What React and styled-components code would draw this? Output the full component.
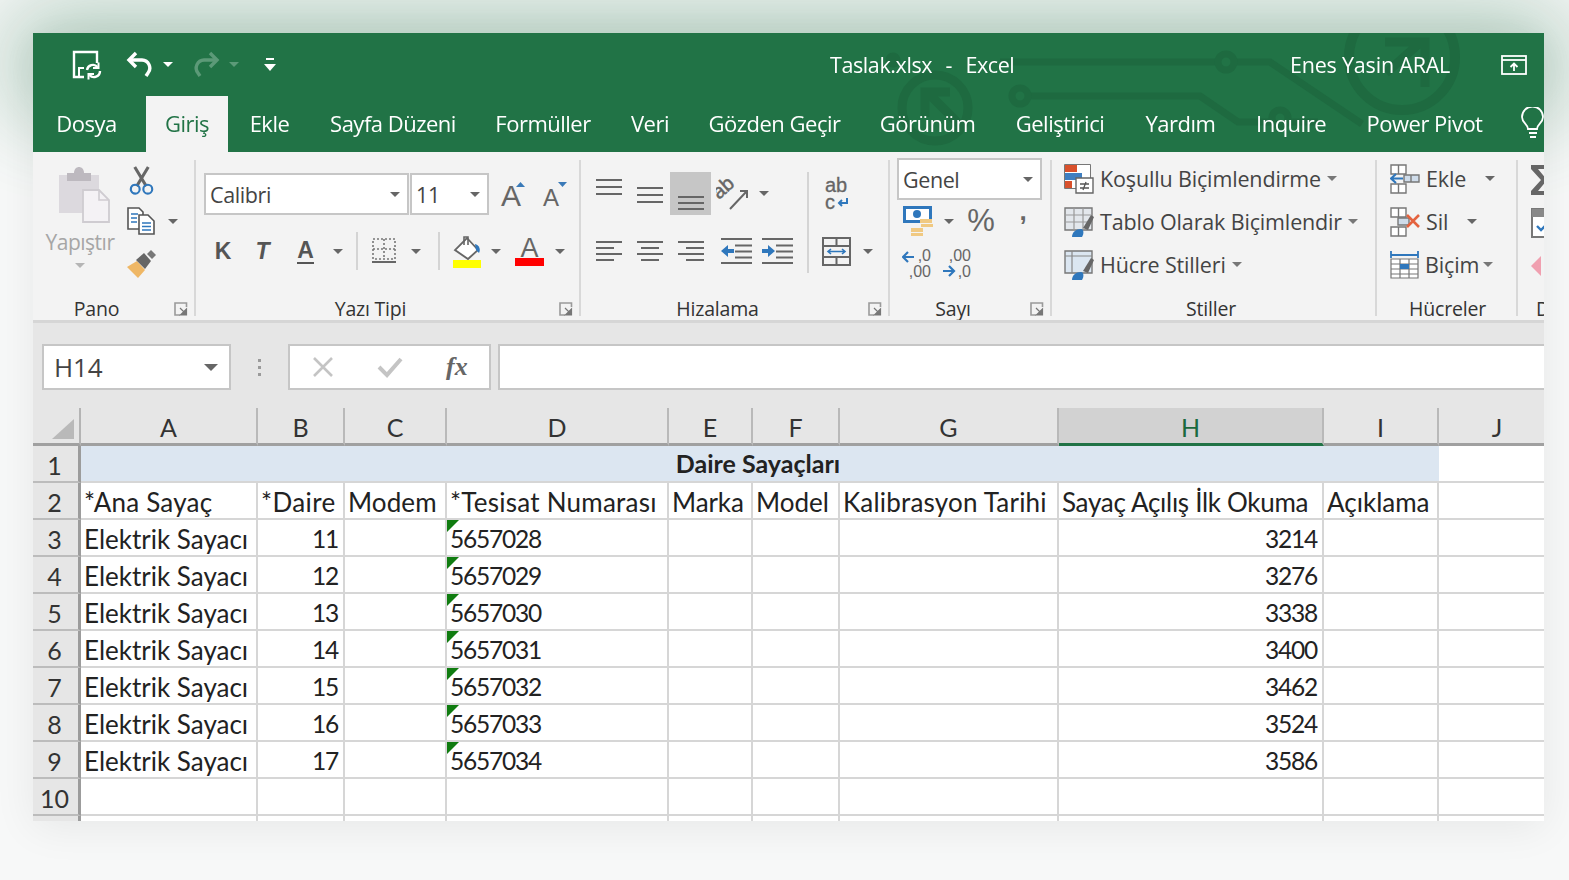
import React from "react";
import styled, { createGlobalStyle } from "styled-components";

const GlobalStyle = createGlobalStyle`
  html, body { margin: 0; padding: 0; background: #f7f8f8; }
  * { box-sizing: border-box; }
`;

const UI_FONT = `"Open Sans", "Noto Sans", sans-serif`;
const CELL_FONT = `Lato, "Open Sans", sans-serif`;
const GREEN = "#217346";

const Page = styled.div`
  width: 1569px;
  height: 880px;
  padding: 33px 25px 0 33px;
  overflow: hidden;
  font-family: ${UI_FONT};
`;

const Window = styled.div`
  width: 1511px;
  height: 788px;
  position: relative;
  display: flex;
  flex-direction: column;
  filter: blur(0.45px);
  box-shadow: 0 6px 40px rgba(0, 0, 0, 0.07);
`;

/* title bar */
const TitleBar = styled.div`
  height: 63px;
  flex: none;
  background: ${GREEN};
  display: flex;
  align-items: center;
  box-shadow: 0 0 90px 20px rgba(33, 115, 70, 0.38);
  color: #fff;
`;

const Qat = styled.div`
  display: flex;
  align-items: center;
  width: 797px;
  padding-left: 39px;
  position: relative;
  z-index: 2;
`;

const QatButton = styled.div`
  width: ${(p) => p.$w}px;
  height: 32px;
  display: flex;
  align-items: center;
  justify-content: ${(p) => p.$justify || "flex-start"};
  flex: none;
`;

const TitleText = styled.div`
  width: 460px;
  font-size: 21.5px;
  letter-spacing: -0.4px;
  word-spacing: 1.5px;
  white-space: pre;
  position: relative;
  z-index: 2;
`;

const UserName = styled.div`
  font-size: 21.5px;
  letter-spacing: -0.2px;
  width: 211px;
  position: relative;
  z-index: 2;
`;

const Circuit = styled.svg`
  position: absolute;
  left: 0;
  top: 0;
  z-index: 1;
  pointer-events: none;
`;

const Tabs = styled.div`
  height: 56px;
  flex: none;
  background: ${GREEN};
  display: flex;
  position: relative;
  overflow: hidden;
  align-items: flex-end;
`;

const Tab = styled.div`
  width: ${(p) => p.$w}px;
  height: 56px;
  flex: none;
  display: flex;
  align-items: center;
  justify-content: center;
  font-size: 22px;
  letter-spacing: -0.5px;
  position: relative;
  z-index: 2;
  padding-bottom: 2px;
  padding-right: ${(p) => p.$pr || 0}px;
  color: ${(p) => (p.$active ? GREEN : "#fff")};
  background: ${(p) => (p.$active ? "#f3f3f3" : "transparent")};
`;

/* ribbon */
const Ribbon = styled.div`
  height: 171px;
  flex: none;
  background: #f3f3f3;
  border-bottom: 3px solid #d6d6d6;
  padding-top: 8px;
  display: flex;
  align-items: flex-start;
  overflow: hidden;
  color: #444;
  position: relative;
`;

const Group = styled.section`
  width: ${(p) => p.$w}px;
  height: 156px;
  flex: none;
  position: relative;
  display: flex;
  flex-direction: column;
  border-right: ${(p) => (p.$last ? "none" : "2px solid #d8d8d8")};
`;

const GroupBody = styled.div`
  flex: 1;
  min-height: 0;
  display: flex;
  padding: ${(p) => p.$pad || "0"};
`;

const GroupLabel = styled.div`
  height: 26px;
  flex: none;
  display: flex;
  align-items: center;
  justify-content: ${(p) => p.$justify || "center"};
  padding: 12px ${(p) => p.$pr || 0}px 0 ${(p) => p.$pl || 0}px;
  font-size: 19.5px;
  letter-spacing: -0.2px;
  line-height: 14px;
  color: #333;
  white-space: nowrap;
`;

const LauncherBox = styled.svg`
  position: absolute;
  right: 6px;
  bottom: 0;
`;

const Column = styled.div`
  display: flex;
  flex-direction: column;
  align-items: ${(p) => p.$align || "flex-start"};
  width: ${(p) => (p.$w ? `${p.$w}px` : "auto")};
  margin-top: ${(p) => p.$mt || 0}px;
  flex: none;
`;

const Row = styled.div`
  display: flex;
  align-items: center;
  height: ${(p) => p.$h || 43}px;
  margin-top: ${(p) => p.$mt || 0}px;
  padding-left: ${(p) => p.$pl || 0}px;
  flex: none;
`;

const Btn = styled.div`
  width: ${(p) => p.$w}px;
  height: 100%;
  flex: none;
  display: flex;
  align-items: center;
  justify-content: center;
  background: ${(p) => (p.$selected ? "#c6c6c6" : "transparent")};
  margin-left: ${(p) => p.$ml || 0}px;
`;

const Caret = styled.i`
  display: block;
  flex: none;
  width: 0;
  height: 0;
  border-left: ${(p) => p.$s || 5}px solid transparent;
  border-right: ${(p) => p.$s || 5}px solid transparent;
  border-top: ${(p) => p.$s || 5}px solid ${(p) => p.$color || "#666"};
  margin-left: ${(p) => p.$ml || 0}px;
`;

const Divider = styled.div`
  width: 2px;
  height: ${(p) => p.$h}px;
  background: #d4d4d4;
  margin-left: ${(p) => p.$ml || 0}px;
  margin-right: ${(p) => p.$mr || 0}px;
  flex: none;
`;

const Combo = styled.div`
  width: ${(p) => p.$w}px;
  height: 42px;
  flex: none;
  background: #fff;
  border: 2px solid #c6c6c6;
  margin-left: ${(p) => p.$ml || 0}px;
  margin-top: ${(p) => p.$mt || 0}px;
  display: flex;
  align-items: center;
  justify-content: space-between;
  padding: 0 7px 0 4px;
  font-size: 21.5px;
  letter-spacing: -0.4px;
  color: #444;
`;

const PasteSlot = styled.div`
  margin: 7px 0 0 7px;
  height: 56px;
`;

const PasteLabel = styled.div`
  font-size: 21px;
  letter-spacing: -0.5px;
  color: #a6a6a6;
  margin-top: 6px;
  line-height: 26px;
`;

const LetterBtn = styled.span`
  font-family: "Liberation Sans", sans-serif;
  font-size: 23px;
  font-weight: 700;
  font-style: ${(p) => (p.$italic ? "italic" : "normal")};
  color: #555;
  border-bottom: ${(p) => (p.$under ? "2px solid #555" : "none")};
  line-height: 24px;
`;

const Percent = styled.span`
  font-family: "Liberation Sans", sans-serif;
  font-size: 31px;
  color: #666;
`;

const Comma = styled.span`
  font-family: "Liberation Sans", sans-serif;
  font-size: 26px;
  font-weight: 700;
  color: #666;
  line-height: 26px;
  margin-bottom: 20px;
`;

const StyleRow = styled.div`
  display: flex;
  align-items: center;
  height: 43px;
  flex: none;
  font-size: 21.5px;
  letter-spacing: -0.15px;
  color: #444;
  white-space: nowrap;
  gap: 6px;
`;

/* formula bar */
const FormulaBar = styled.div`
  height: 85px;
  flex: none;
  background: #e6e6e6;
  padding: 21px 0 0 9px;
  display: flex;
  align-items: flex-start;
`;

const NameBox = styled.div`
  width: 189px;
  height: 46px;
  background: #fff;
  border: 2px solid #c6c6c6;
  display: flex;
  align-items: center;
  justify-content: space-between;
  padding: 0 11px 0 10px;
  font-size: 26px;
  letter-spacing: -0.2px;
  color: #444;
`;

const GripDots = styled.div`
  width: 57px;
  height: 46px;
  display: flex;
  flex-direction: column;
  align-items: center;
  justify-content: center;
  gap: 4px;
  & > i {
    display: block;
    width: 3px;
    height: 3px;
    background: #9a9a9a;
  }
`;

const FxBox = styled.div`
  width: 203px;
  height: 46px;
  background: #fff;
  border: 2px solid #c6c6c6;
  display: flex;
  align-items: center;
  gap: 43px;
  padding-left: 22px;
  margin-right: 7px;
`;

const FxMark = styled.span`
  font-family: "Liberation Serif", serif;
  font-style: italic;
  font-weight: 700;
  font-size: 26px;
  color: #666;
`;

const FormulaInput = styled.div`
  flex: 1;
  height: 46px;
  background: #fff;
  border: 2px solid #c6c6c6;
  border-right: none;
`;

/* sheet */
const Sheet = styled.div`
  flex: 1;
  min-height: 0;
  overflow: hidden;
  background: #fff;
  display: grid;
  grid-template-columns: 48px 177px 87px 102px 222px 84px 87px 219px 265px 115px 118px;
  grid-template-rows: 38px;
  grid-auto-rows: 37px;
  font-family: ${CELL_FONT};
  font-size: 26px;
  color: #222;
`;

const Corner = styled.div`
  background: #e6e6e6;
  border-right: 2px solid #b4b4b4;
  border-bottom: 3px solid #a0a0a0;
  display: flex;
  align-items: flex-end;
  justify-content: flex-end;
  padding: 0 5px 4px 0;
`;

const ColHead = styled.div`
  background: ${(p) => (p.$selected ? "#d2d2d2" : "#e6e6e6")};
  border-right: 2px solid #b9b9b9;
  border-bottom: 3px solid ${(p) => (p.$selected ? GREEN : "#a0a0a0")};
  display: flex;
  align-items: center;
  justify-content: center;
  padding-top: 3px;
  font-size: 25px;
  color: ${(p) => (p.$selected ? "#1c6a3e" : "#333")};
`;

const RowHead = styled.div`
  background: #e6e6e6;
  border-right: 3px solid #9c9c9c;
  border-bottom: 2px solid #bcbcbc;
  display: flex;
  align-items: center;
  justify-content: center;
  color: #333;
  font-size: 25px;
  padding: 2px 2px 0 0;
`;

const Cell = styled.div`
  border-right: 2px solid #d6d6d6;
  border-bottom: 2px solid #d6d6d6;
  display: flex;
  align-items: center;
  justify-content: ${(p) => (p.$right ? "flex-end" : "flex-start")};
  padding: 2px 5px 0 3px;
  white-space: nowrap;
  overflow: hidden;
  position: relative;
  font-size: ${(p) => (p.$digits ? "24.5px" : "26px")};
  letter-spacing: ${(p) => (p.$digits ? "-1.2px" : `${p.$ls || 0}px`)};
  &::before {
    content: "";
    display: ${(p) => (p.$flag ? "block" : "none")};
    position: absolute;
    left: 0;
    top: 0;
    border-top: 12px solid #107c10;
    border-right: 12px solid transparent;
  }
`;

const MergedCell = styled.div`
  grid-column: span 9;
  background: #dce6f1;
  border-bottom: 2px solid #d6d6d6;
  display: flex;
  align-items: center;
  justify-content: center;
  font-weight: 700;
  font-size: 25px;
  padding: 0 4px 2px 0;
`;

/* icons */
const Launcher = () => (
  <LauncherBox width="14" height="14" viewBox="0 0 14 14">
    <path d="M12.5 5V1H1v12h5" fill="none" stroke="#9a9a9a" strokeWidth="1.6" />
    <path d="M6 6l6 6M12.5 7v6h-6z" fill="#777" stroke="#777" strokeWidth="1.2" />
  </LauncherBox>
);

const SaveIcon = () => (
  <svg width="30" height="30" viewBox="0 0 30 30" fill="none" stroke="#fff" strokeWidth="2.4">
    <path d="M12 27H2V2h23v11" />
    <path d="M7 27v-9h5" strokeWidth="2" />
    <path d="M15 20a6 6 0 0 1 10.5-3M28 21a6 6 0 0 1-10.5 4" />
    <path d="M26.5 12.5v5.5h-5.5M16.5 29.5V24h5.5" strokeWidth="2" />
  </svg>
);

const UndoIcon = ({ color = "#fff", flip }) => (
  <svg width="28" height="28" viewBox="0 0 28 28" fill="none" stroke={color} strokeWidth="3.4" style={flip ? { transform: "scaleX(-1)" } : undefined}>
    <path d="M10 2L3 9l7 7" />
    <path d="M3 9h13a8 8 0 0 1 6 13l-2 3" />
  </svg>
);

const CustomizeIcon = () => (
  <svg width="12" height="14" viewBox="0 0 12 14">
    <path d="M2 1h8" stroke="#fff" strokeWidth="2" />
    <path d="M0 6h12l-6 7z" fill="#fff" />
  </svg>
);

const RestoreIcon = () => (
  <svg width="26" height="20" viewBox="0 0 26 20" fill="none" stroke="#fff" strokeWidth="1.8">
    <rect x="1" y="1" width="24" height="18" />
    <path d="M1 5h24" />
    <path d="M13 16V9M9.5 12L13 8.5l3.5 3.5" />
  </svg>
);

const BulbIcon = () => (
  <svg width="23" height="32" viewBox="0 0 23 32" fill="none" stroke="#fff" strokeWidth="1.8">
    <path d="M7 22c0-5-6-6-6-12a10 10 0 0 1 21 0c0 6-6 7-6 12z" />
    <path d="M8 26h8M9 30h6" />
  </svg>
);

const PasteIcon = () => (
  <svg width="52" height="56" viewBox="0 0 52 56">
    <path d="M1 8h40v38H1z" fill="#dcd9de" />
    <path d="M9 6h24v8H9z" fill="#bdb9bf" />
    <path d="M16 6c0-8 10-8 10 0z" fill="#bdb9bf" />
    <path d="M25 23h16l10 10v22H25z" fill="#f4f2f5" stroke="#cfccd1" strokeWidth="1.8" />
    <path d="M41 23v10h10" fill="none" stroke="#cfccd1" strokeWidth="1.6" />
  </svg>
);

const CutIcon = () => (
  <svg width="27" height="29" viewBox="0 0 26 30" fill="none">
    <path d="M6 1l12 20M20 1L8 21" stroke="#666" strokeWidth="3.2" />
    <circle cx="6.5" cy="24" r="4.6" stroke="#2f77bc" strokeWidth="2.2" />
    <circle cx="19.5" cy="24" r="4.6" stroke="#2f77bc" strokeWidth="2.2" />
  </svg>
);

const CopyIcon = () => (
  <svg width="28" height="28" viewBox="0 0 28 28" fill="#fff" stroke="#555" strokeWidth="1.6">
    <path d="M1 1h11l4 4v17H1z" />
    <path d="M12 8h9l6 6v13H12z" />
    <path d="M4 7h7M4 11h6M4 15h6" stroke="#2f77bc" />
    <path d="M15 16h9M15 19.5h9M15 23h9" stroke="#2f77bc" />
  </svg>
);

const PainterIcon = () => (
  <svg width="30" height="28" viewBox="0 0 30 28">
    <path d="M0 17l10-6 8 9-7 8z" fill="#efb765" />
    <path d="M9 10l8-7 7 8-6 8z" fill="#666" />
    <path d="M20 4l4-4 5 5-4 4z" fill="#777" />
  </svg>
);

const GrowIcon = ({ size, up }) => (
  <svg width="27" height="42" viewBox="0 -8 27 42">
    <text x="1" y="25" fontFamily="Liberation Sans, sans-serif" fontSize={size} fill="#666">A</text>
    <path d={up ? "M16 6l4.5-5 4.5 5z" : "M16 1l4.5 5 4.5-5z"} fill="#3a7ab8" />
  </svg>
);

const BorderIcon = () => (
  <svg width="26" height="28" viewBox="0 0 26 28" fill="none" stroke="#777">
    <rect x="2" y="2" width="22" height="20" strokeDasharray="2 2" strokeWidth="1.6" />
    <path d="M13 2v20M2 12h22" strokeDasharray="2 2" strokeWidth="1.6" />
    <path d="M1 25h24" strokeWidth="2" stroke="#666" />
  </svg>
);

const FillIcon = () => (
  <svg width="32" height="33" viewBox="0 0 32 33">
    <path d="M16 3l11 12-10 9L4 15z" fill="#fff" stroke="#666" strokeWidth="1.8" />
    <path d="M13 10V2h4v8" fill="none" stroke="#666" strokeWidth="1.6" />
    <path d="M24 9c4 1 6 5 4 9l-3-3z" fill="#2f77bc" />
    <rect x="2" y="25" width="28" height="8" fill="#ffff00" />
  </svg>
);

const FontColorIcon = () => (
  <svg width="29" height="42" viewBox="0 -6 29 42">
    <text x="14.5" y="21" textAnchor="middle" fontFamily="Liberation Sans, sans-serif" fontSize="27" fill="#666">A</text>
    <rect x="0" y="22" width="29" height="8" fill="#ff0000" />
  </svg>
);

const Lines = ({ ys, rows, w = 26 }) => (
  <svg width={w} height="40" viewBox={`0 0 ${w} 40`} stroke="#666" strokeWidth="2">
    {ys.map((y, i) => {
      const [a, b] = rows ? rows[i] : [0, w];
      return <path key={y} d={`M${a} ${y}H${b}`} />;
    })}
  </svg>
);

const Indent = ({ dir }) => (
  <svg width="31" height="26" viewBox="0 0 31 26">
    <path d="M0 1h31M14 7.5h17M14 13.5h17M14 19.5h17M0 25h31" stroke="#666" strokeWidth="2" />
    <path d={dir === "left" ? "M0 13l7-6v4h6v4H7v4z" : "M13 13L6 7v4H0v4h6v4z"} fill="#2f77bc" />
  </svg>
);

const OrientIcon = () => (
  <svg width="32" height="34" viewBox="0 -2 32 34">
    <text x="3" y="21" transform="rotate(-42 3 21)" fontFamily="Liberation Sans, sans-serif" fontSize="20" fill="#666" stroke="#666" strokeWidth="0.5">ab</text>
    <path d="M14 30L30 13M24 12h7v7" fill="none" stroke="#666" strokeWidth="2" />
  </svg>
);

const WrapIcon = () => (
  <svg width="24" height="36" viewBox="0 -2 24 36">
    <text x="0" y="14" fontFamily="Liberation Sans, sans-serif" fontSize="20" fill="#666" stroke="#666" strokeWidth="0.3">ab</text>
    <text x="0" y="31" fontFamily="Liberation Sans, sans-serif" fontSize="20" fill="#666" stroke="#666" strokeWidth="0.3">c</text>
    <path d="M22 20v5h-8M17 22l-3 3 3 3" fill="none" stroke="#2f77bc" strokeWidth="2" />
  </svg>
);

const MergeIcon = () => (
  <svg width="29" height="29" viewBox="0 0 29 29" fill="none" stroke="#666" strokeWidth="2">
    <rect x="1" y="1" width="27" height="27" />
    <path d="M1 9h27M1 20h27M14.5 1v8M14.5 20v8" />
    <path d="M6 14.5h17M9 12l-3 2.5 3 2.5M20 12l3 2.5-3 2.5" stroke="#2f77bc" strokeWidth="1.6" />
  </svg>
);

const CurrencyIcon = () => (
  <svg width="32" height="32" viewBox="0 0 32 32">
    <path d="M1 1h29v17H1z" fill="#2f77bc" />
    <path d="M4 4h23v11H4z" fill="#fff" />
    <circle cx="15" cy="9" r="4" fill="#2f77bc" />
    <path d="M18 14h12v4H18zM19 19h12v3H19zM9 23h12v4H9zM9 28h12v3H9z" fill="#f0c982" />
  </svg>
);

const DecimalIcon = ({ top, bottom, dir }) => (
  <svg width="29" height="32" viewBox="0 -1 29 32">
    <text x="29" y="12" textAnchor="end" fontFamily="Liberation Sans, sans-serif" fontSize="16" fill="#666">{top}</text>
    <text x="29" y="28" textAnchor="end" fontFamily="Liberation Sans, sans-serif" fontSize="16" fill="#666">{bottom}</text>
    {dir === "left" ? (
      <path d="M1 8h11M6 3L1 8l5 5" fill="none" stroke="#2f77bc" strokeWidth="2.2" />
    ) : (
      <path d="M1 22h11M7 17l5 5-5 5" fill="none" stroke="#2f77bc" strokeWidth="2.2" />
    )}
  </svg>
);

const CondIcon = () => (
  <svg width="30" height="30" viewBox="0 0 30 30">
    <path d="M0.5 0.5h26v24H0.5z" fill="#fff" stroke="#777" />
    <path d="M1 1h12v7H1z" fill="#d9512c" />
    <path d="M1 9h17v7H1z" fill="#3f7fc1" />
    <path d="M1 17h7v7H1z" fill="#d9512c" />
    <path d="M12 14h17v15H12z" fill="#fff" stroke="#666" strokeWidth="1.4" />
    <path d="M16 20h9M16 24h9M22 18l-3 8" stroke="#555" strokeWidth="1.3" />
  </svg>
);

const TableIcon = ({ plain }) => (
  <svg width="30" height="30" viewBox="0 0 30 30">
    <path d="M1 1h27v22H1z" fill={plain ? "#dbe6f1" : "#e3e7ec"} stroke="#777" strokeWidth="1.4" />
    {!plain && <path d="M1 8h27M1 15h27M10 1v22M19 1v22" stroke="#999" strokeWidth="1.2" />}
    {plain && <path d="M1 6h27M8 1v22" stroke="#888" strokeWidth="1.2" fill="none" />}
    <path d="M19 21l8-13 3 2-6 13z" fill="#666" />
    <path d="M8 30c0-5 4-8 9-8 3 0 3 5 1 8z" fill="#2f77bc" />
  </svg>
);

const InsertIcon = () => (
  <svg width="30" height="30" viewBox="0 0 30 30" fill="#fff" stroke="#777" strokeWidth="1.4">
    <path d="M1 1h15v9H1zM8.5 1v9M1 20h15v9H1zM8.5 20v9" />
    <path d="M14 11h15v7H14zM21 11v7" fill="#cfdcea" />
    <path d="M13 14.5H2M6 10l-5 4.5L6 19" fill="none" stroke="#2f77bc" strokeWidth="2.2" />
  </svg>
);

const DeleteIcon = () => (
  <svg width="30" height="30" viewBox="0 0 30 30" fill="#fff" stroke="#777" strokeWidth="1.4">
    <path d="M1 1h15v9H1zM8.5 1v9M1 20h15v9H1zM8.5 20v9" />
    <path d="M8 11h11v7H8z" fill="#cfdcea" />
    <path d="M17 8l12 12M29 8L17 20" stroke="#e4633f" strokeWidth="2.6" />
  </svg>
);

const FormatIcon = () => (
  <svg width="29" height="30" viewBox="0 0 29 30" fill="none" stroke="#777" strokeWidth="1.2">
    <path d="M1 5h27M1 1v7M28 1v7" stroke="#2f77bc" strokeWidth="1.8" />
    <path d="M1 9h27v19H1z" fill="#fff" />
    <path d="M1 14h27M1 19h27M1 24h27M10 9v19M19 9v19" />
    <path d="M10 14h9v5h-9z" fill="#2f77bc" stroke="none" />
  </svg>
);

const SigmaIcon = () => (
  <svg width="14" height="30" viewBox="0 0 14 30">
    <path d="M0 0h26v4H7l9 11-9 11h19v4H0v-4l10-11L0 4z" fill="#666" />
  </svg>
);

const FillDownIcon = () => (
  <svg width="14" height="30" viewBox="0 0 14 30">
    <path d="M1 1h26v28H1z" fill="#fff" stroke="#777" strokeWidth="2" />
    <path d="M1 1h26v8H1z" fill="#888" />
    <path d="M6 18l4 4 4-4" fill="none" stroke="#2f77bc" strokeWidth="2.4" />
  </svg>
);

const EraserIcon = () => (
  <svg width="10" height="24" viewBox="0 0 10 24">
    <path d="M0 12L12 0v24z" fill="#f0a0b0" />
  </svg>
);

const CrossIcon = () => (
  <svg width="22" height="22" viewBox="0 0 22 22" stroke="#c4c4c4" strokeWidth="2.6">
    <path d="M2 2l18 18M20 2L2 20" />
  </svg>
);

const CheckIcon = () => (
  <svg width="26" height="22" viewBox="0 0 26 22" fill="none" stroke="#c4c4c4" strokeWidth="4">
    <path d="M2 11l8 8L24 3" />
  </svg>
);

const CornerMark = () => (
  <svg width="22" height="20" viewBox="0 0 22 20">
    <path d="M22 0v20H0z" fill="#b9b9b9" />
  </svg>
);

const CircuitArt = () => (
  <Circuit width="1511" height="119" viewBox="33 33 1511 119" fill="none" stroke="#1e6a40" strokeWidth="7">
    <circle cx="893" cy="60" r="4" />
    <path d="M1000 62h270l92 62" />
    <circle cx="1226" cy="62" r="8" fill={GREEN} />
    <path d="M1028 96h172l38 26h80" />
    <circle cx="1020" cy="96" r="8" fill={GREEN} />
    <circle cx="1280" cy="118" r="8" fill={GREEN} />
    <circle cx="935" cy="108" r="33" strokeWidth="9" />
    <path d="M960 125l-30-30M925 117V92h25" strokeWidth="9" />
    <circle cx="1402" cy="57" r="53" strokeWidth="10" />
    <path d="M1386 73l36-32M1385 42h40v45" strokeWidth="9" />
  </Circuit>
);

const TABS = [
  ["Dosya", 113, false, 6], ["Giriş", 82, true], ["Ekle", 83], ["Sayfa Düzeni", 164], ["Formüller", 136],
  ["Veri", 78], ["Gözden Geçir", 171], ["Görünüm", 135], ["Geliştirici", 130], ["Yardım", 111],
  ["Inquire", 110], ["Power Pivot", 157],
];

const COLUMNS = ["A", "B", "C", "D", "E", "F", "G", "H", "I", "J"];
const HEADINGS = [
  ["*Ana Sayaç", 0.2], ["*Daire", 0.4], ["Modem", 0.1], ["*Tesisat Numarası", 0.25], ["Marka", -0.1],
  ["Model", 0], ["Kalibrasyon Tarihi", 0.2], ["Sayaç Açılış İlk Okuma", -0.3], ["Açıklama", 0], ["", 0],
];
const ROWS = [
  [11, "5657028", 3214], [12, "5657029", 3276], [13, "5657030", 3338], [14, "5657031", 3400],
  [15, "5657032", 3462], [16, "5657033", 3524], [17, "5657034", 3586],
];

function App() {
  return (
    <Page>
      <GlobalStyle />
      <Window>
        <TitleBar>
          <Qat>
            <QatButton $w={54}><SaveIcon /></QatButton>
            <QatButton $w={37}><UndoIcon /></QatButton>
            <QatButton $w={29}><Caret $color="#fff" /></QatButton>
            <QatButton $w={37}><UndoIcon flip color="#5c9a78" /></QatButton>
            <QatButton $w={35}><Caret $color="#5c9a78" /></QatButton>
            <QatButton $w={12}><CustomizeIcon /></QatButton>
          </Qat>
          <TitleText>Taslak.xlsx  -  Excel</TitleText>
          <UserName>Enes Yasin ARAL</UserName>
          <RestoreIcon />
        </TitleBar>
        <Tabs>
          {TABS.map(([label, w, active, pr]) => (
            <Tab key={label} $w={w} $active={active} $pr={pr}>{label}</Tab>
          ))}
          <Tab $w={59}><BulbIcon /></Tab>
        </Tabs>
        <CircuitArt />

        <Ribbon>
          <Group $w={163}>
            <GroupBody>
              <Column $w={94} $align="center">
                <PasteSlot><PasteIcon /></PasteSlot>
                <PasteLabel>Yapıştır</PasteLabel>
                <Row $h={20}><Caret $color="#b5b5b5" /></Row>
              </Column>
              <Column>
                <Row $h={40} $pl={1}><CutIcon /></Row>
                <Row $h={42}><CopyIcon /><Caret $ml={13} /></Row>
                <Row $h={43}><PainterIcon /></Row>
              </Column>
            </GroupBody>
            <GroupLabel $pr={34}>Pano</GroupLabel>
            <Launcher />
          </Group>

          <Group $w={385}>
            <GroupBody $pad="13px 0 0 8px">
              <Column>
                <Row $h={42}>
                  <Combo $w={205}>Calibri<Caret /></Combo>
                  <Combo $w={79} $ml={1}>11<Caret /></Combo>
                  <Btn $w={36} $ml={6}><GrowIcon size={30} up /></Btn>
                  <Btn $w={36} $ml={6}><GrowIcon size={24} /></Btn>
                </Row>
                <Row $h={42} $mt={15}>
                  <Btn $w={38}><LetterBtn>K</LetterBtn></Btn>
                  <Btn $w={41}><LetterBtn $italic>T</LetterBtn></Btn>
                  <Btn $w={41} $ml={2}><LetterBtn $under>A</LetterBtn></Btn>
                  <Caret $ml={7} />
                  <Divider $h={38} $ml={13} $mr={13} />
                  <BorderIcon />
                  <Caret $ml={14} />
                  <Divider $h={38} $ml={17} $mr={11} />
                  <FillIcon />
                  <Caret $ml={8} />
                  <Btn $w={29} $ml={14}><FontColorIcon /></Btn>
                  <Caret $ml={11} />
                </Row>
              </Column>
            </GroupBody>
            <GroupLabel $pr={34}>Yazı Tipi</GroupLabel>
            <Launcher />
          </Group>

          <Group $w={309}>
            <GroupBody $pad="12px 0 0 7px">
              <Column $w={219}>
                <Row $h={43}>
                  <Btn $w={41}><Lines ys={[6, 13, 20]} /></Btn>
                  <Btn $w={41}><Lines ys={[14, 21, 28]} /></Btn>
                  <Btn $w={41} $selected><Lines ys={[23, 29, 35]} /></Btn>
                  <Btn $w={41} $ml={0}><OrientIcon /></Btn>
                  <Caret $ml={7} />
                </Row>
                <Row $h={42} $mt={15}>
                  <Btn $w={41}><Lines ys={[11, 17, 23, 29]} rows={[[0, 26], [0, 18], [0, 26], [0, 18]]} /></Btn>
                  <Btn $w={41}><Lines ys={[11, 17, 23, 29]} rows={[[0, 26], [4, 22], [0, 26], [4, 22]]} /></Btn>
                  <Btn $w={41}><Lines ys={[11, 17, 23, 29]} rows={[[0, 26], [8, 26], [0, 26], [8, 26]]} /></Btn>
                  <Btn $w={41} $ml={5}><Indent dir="left" /></Btn>
                  <Btn $w={41}><Indent dir="right" /></Btn>
                </Row>
              </Column>
              <Divider $h={101} $ml={0} $mr={13} />
              <Column>
                <Row $h={43} $pl={3}><WrapIcon /></Row>
                <Row $h={42} $mt={15}>
                  <MergeIcon />
                  <Caret $ml={12} />
                </Row>
              </Column>
            </GroupBody>
            <GroupLabel $pr={34}>Hizalama</GroupLabel>
            <Launcher />
          </Group>

          <Group $w={162}>
            <GroupBody $pad="0 0 0 7px">
              <Column $mt={-2}>
                <Combo $w={145}>Genel<Caret /></Combo>
                <Row $h={42} $pl={5}>
                  <CurrencyIcon />
                  <Caret $ml={10} />
                  <Btn $w={30} $ml={12}><Percent>%</Percent></Btn>
                  <Btn $w={14} $ml={20}><Comma>,</Comma></Btn>
                </Row>
                <Row $h={43} $pl={5}>
                  <DecimalIcon top=",0" bottom=",00" dir="left" />
                  <Btn $w={29} $ml={11}><DecimalIcon top=",00" bottom=",0" dir="right" /></Btn>
                </Row>
              </Column>
            </GroupBody>
            <GroupLabel $pr={34}>Sayı</GroupLabel>
            <Launcher />
          </Group>

          <Group $w={325}>
            <GroupBody $pad="0 0 0 12px">
              <Column $mt={-3}>
                <StyleRow><CondIcon />Koşullu Biçimlendirme<Caret $color="#777" /></StyleRow>
                <StyleRow><TableIcon />Tablo Olarak Biçimlendir<Caret $color="#777" /></StyleRow>
                <StyleRow><TableIcon plain />Hücre Stilleri<Caret $color="#777" /></StyleRow>
              </Column>
            </GroupBody>
            <GroupLabel $pr={5}>Stiller</GroupLabel>
          </Group>

          <Group $w={141}>
            <GroupBody $pad="0 0 0 13px">
              <Column $mt={-3}>
                <StyleRow><InsertIcon />Ekle<Caret $ml={13} /></StyleRow>
                <StyleRow><DeleteIcon />Sil<Caret $ml={13} /></StyleRow>
                <StyleRow><FormatIcon />Biçim<Caret $color="#777" $ml={-2} /></StyleRow>
              </Column>
            </GroupBody>
            <GroupLabel $pl={2}>Hücreler</GroupLabel>
          </Group>

          <Group $w={26} $last>
            <GroupBody $pad="0 0 0 13px">
              <Column $mt={-2}>
                <Row $h={43}><SigmaIcon /></Row>
                <Row $h={43}><FillDownIcon /></Row>
                <Row $h={43}><EraserIcon /></Row>
              </Column>
            </GroupBody>
            <GroupLabel $justify="flex-start" $pl={18}>D</GroupLabel>
          </Group>
        </Ribbon>

        <FormulaBar>
          <NameBox>H14<Caret $s={7} /></NameBox>
          <GripDots><i /><i /><i /></GripDots>
          <FxBox>
            <CrossIcon />
            <CheckIcon />
            <FxMark>fx</FxMark>
          </FxBox>
          <FormulaInput />
        </FormulaBar>

        <Sheet>
          <Corner><CornerMark /></Corner>
          {COLUMNS.map((c) => <ColHead key={c} $selected={c === "H"}>{c}</ColHead>)}

          <RowHead>1</RowHead>
          <MergedCell>Daire Sayaçları</MergedCell>
          <Cell />

          <RowHead>2</RowHead>
          {HEADINGS.map(([h, ls], i) => <Cell key={COLUMNS[i]} $ls={ls}>{h}</Cell>)}

          {ROWS.map(([flat, meter, reading], i) => (
            <React.Fragment key={meter}>
              <RowHead>{i + 3}</RowHead>
              <Cell>Elektrik Sayacı</Cell>
              <Cell $right $digits>{flat}</Cell>
              <Cell />
              <Cell $flag $digits>{meter}</Cell>
              <Cell />
              <Cell />
              <Cell />
              <Cell $right $digits>{reading}</Cell>
              <Cell />
              <Cell />
            </React.Fragment>
          ))}

          <RowHead>10</RowHead>
          {COLUMNS.map((c) => <Cell key={c} />)}
          <RowHead />
          {COLUMNS.map((c) => <Cell key={c} />)}
        </Sheet>
      </Window>
    </Page>
  );
}

export default App;
